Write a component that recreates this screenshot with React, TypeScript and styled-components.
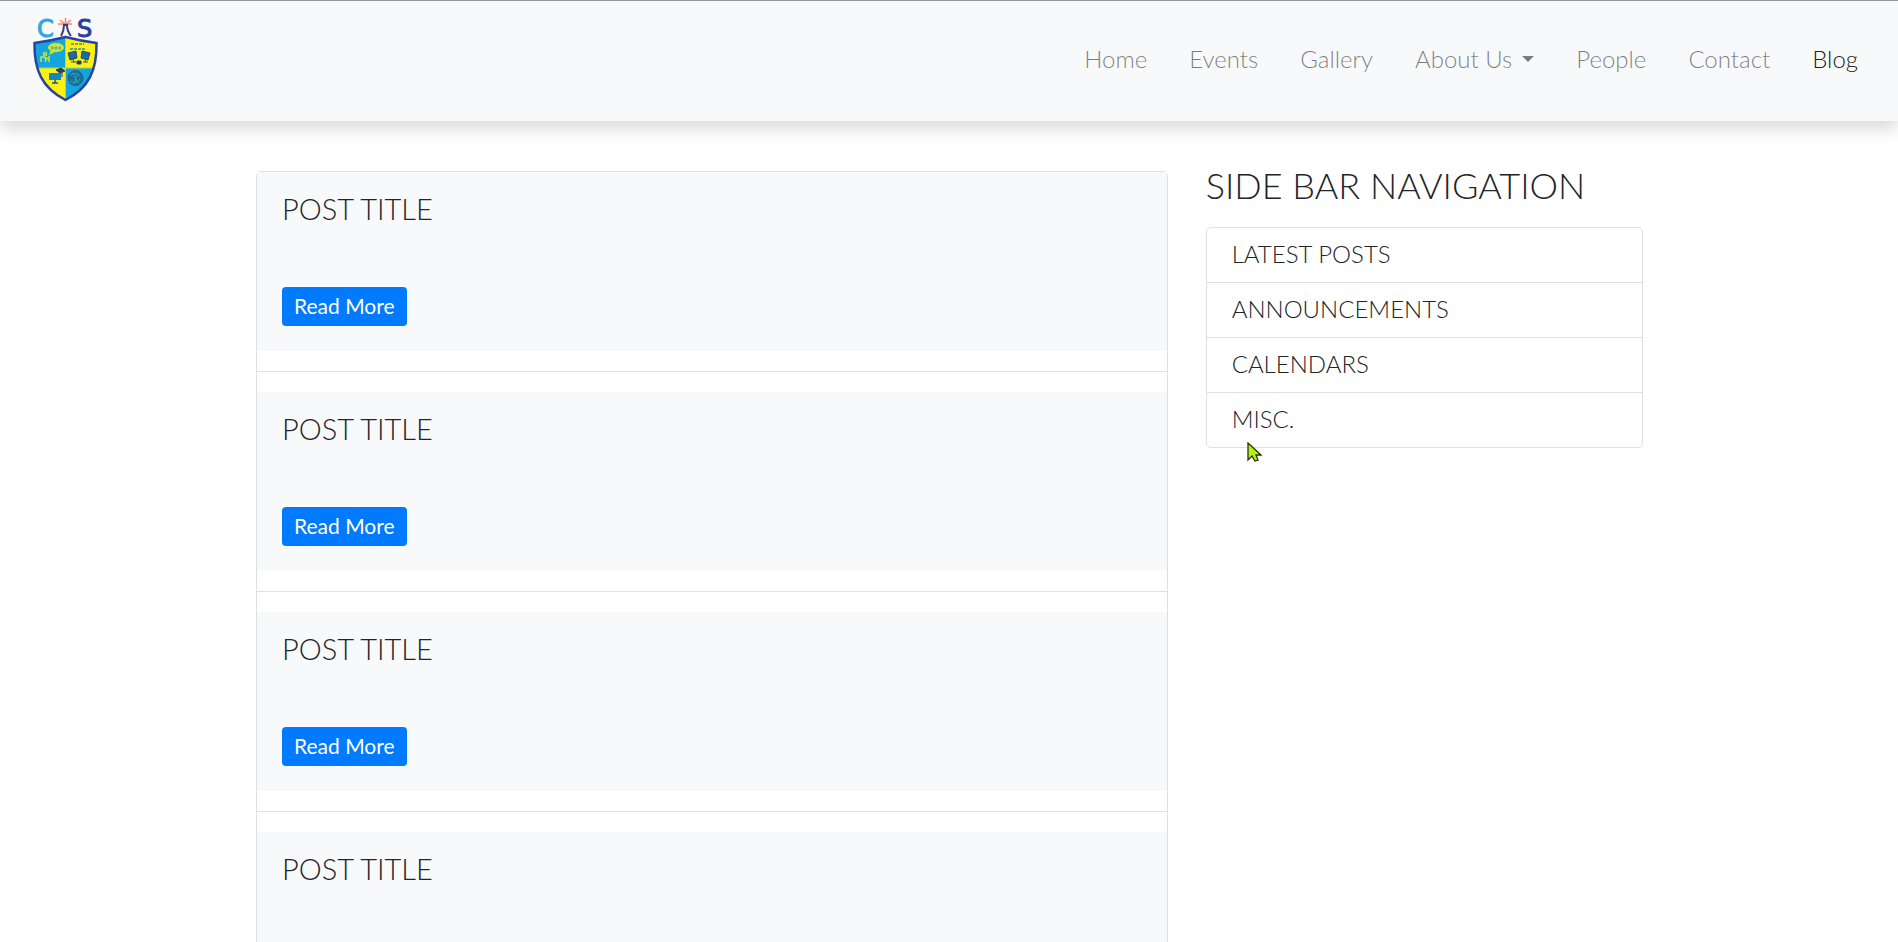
import React from 'react';
import styled, { createGlobalStyle } from 'styled-components';

const GlobalStyle = createGlobalStyle`
  *, *::before, *::after { box-sizing: border-box; }
  html, body { margin: 0; }
  body {
    background: #fff;
    color: #212529;
    font-family: Lato, "Liberation Sans", sans-serif;
    font-size: 24px;
    font-weight: 300;
    line-height: 30px;
  }
`;

const Page = styled.div`
  height: 100vh;
  overflow-y: auto;
  scrollbar-width: none;
`;

const Navbar = styled.header`
  display: flex;
  align-items: center;
  justify-content: space-between;
  padding: 10px 40px 10px 20px;
  background: #f8f9fa;
  border-top: 1px solid #97989c;
  box-shadow: 0 8px 16px rgba(0, 0, 0, 0.15);
`;

const Brand = styled.a`
  display: block;
  height: 100px;
  svg { display: block; }
`;

const NavList = styled.ul`
  display: flex;
  gap: 42px;
  margin: 0;
  padding: 0 0 4px;
  list-style: none;
`;

const NavLink = styled.a<{ $active?: boolean }>`
  display: flex;
  align-items: center;
  gap: 10px;
  color: ${(p) => (p.$active ? 'rgba(0, 0, 0, 0.9)' : 'rgba(0, 0, 0, 0.5)')};
  font-size: 24px;
  text-decoration: none;
`;

const Caret = styled.span`
  border-top: 6px solid currentColor;
  border-left: 6px solid transparent;
  border-right: 6px solid transparent;
`;

const Container = styled.div`
  display: grid;
  grid-template-columns: 2fr 1fr;
  column-gap: 1px;
  align-items: start;
  max-width: 1424px;
  margin: 50px auto 0;
`;

const Column = styled.div`
  padding: 0 18px 0 19px;
`;

const Feed = styled.main`
  border: 1px solid #dfdfdf;
  border-radius: 5px;
`;

const Post = styled.article`
  padding: 25px;
  background: #f8f9fa;
`;

const PostTitle = styled.h2`
  margin: 0 0 67px;
  font-size: 29px;
  font-weight: 300;
  line-height: 23px;
`;

const ReadMore = styled.button`
  display: block;
  height: 39px;
  padding: 0 12px 2px;
  border: 0;
  border-radius: 4px;
  background: #007bff;
  color: #fff;
  font: 400 21px/36px Lato, "Liberation Sans", sans-serif;
`;

const Divider = styled.hr`
  margin: 20px 0;
  border: 0;
  border-top: 1px solid #e0e1e2;
`;

const SideTitle = styled.h1`
  margin: 0 0 28px;
  font-size: 36px;
  font-weight: 300;
  line-height: 28px;
  white-space: nowrap;
`;

const SideList = styled.ul`
  margin: 0;
  padding: 0;
  list-style: none;
  border: 1px solid #dfdfdf;
  border-radius: 5px;
`;

const SideItem = styled.li`
  position: relative;
  & + & { border-top: 1px solid #dfdfdf; }
`;

const SideLink = styled.a`
  display: block;
  padding: 11px 25px 13px;
  color: #212529;
  text-decoration: none;
`;

const Pointer = styled.svg`
  position: absolute;
  top: 49px;
  left: 40px;
`;

function Logo() {
  return (
    <svg width="90" height="100" viewBox="20 11 90 100" role="img" aria-label="CAS">
      <rect x="22" y="16" width="84" height="91" fill="#f9f9fa" />
      <g fontFamily="DejaVu Sans" fontWeight="400" fontSize="24" strokeWidth="1">
        <text x="37" y="37" fill="#2aa9e6" stroke="#2aa9e6">C</text>
        <text x="77" y="37" fill="#2f3f9c" stroke="#2f3f9c">S</text>
      </g>
      <path d="M58 24h14M60 20l5 4M71 20l-5 4M65.500 18v7" stroke="#f0896e" strokeWidth="1.500" />
      <path d="M61 36q3-5 3-11h3q0 6 4 11" fill="none" stroke="#3d3b72" strokeWidth="2" />
      <clipPath id="shield"><path d="M34.500 43Q50 41 65.500 37Q81 41 96.500 43C97 70 89 88 65.500 100C42 88 34 70 34.500 43Z" /></clipPath>
      <g clipPath="url(#shield)">
        <rect x="30" y="35" width="36" height="33" fill="#13a5dc" />
        <rect x="66" y="35" width="34" height="33" fill="#fbef13" />
        <rect x="30" y="68" width="36" height="35" fill="#fbef13" />
        <rect x="66" y="68" width="34" height="35" fill="#13a5dc" />
        <path d="M65.500 36v66M34 68h63" stroke="#b6d548" strokeWidth="1" />
      </g>
      <ellipse cx="56" cy="47.500" rx="8" ry="4.500" fill="#d5e52d" />
      <path d="m51 50-2 5 6-3z" fill="#d5e52d" />
      <path d="M51 48h10M52 46v4M56 46v4M60 46v4" stroke="#4daf9b" strokeWidth="1" />
      <g fill="none" stroke="#c9e33b" strokeWidth="1.500">
        <circle cx="45" cy="54" r="1.500" />
        <path d="M41 62v-5h4l1 5M44 57l4 2M49 62v-6" />
      </g>
      <path d="M71 44h13M70 49h16" stroke="#6da65c" strokeWidth="2" strokeDasharray="3 1" />
      <g fill="#176f9e" stroke="#244f70" strokeWidth="1">
        <path d="m68 53 8-2 1 7-7 2zM82 51l8 2-2 7-7-2z" />
        <path d="m73 59 1 3M86 59l-1 3M71 62h5M83 62h5" />
        <path d="M77 61h4v3h-4z" fill="#25334f" />
      </g>
      <path d="M49 73h12v7H49z" fill="#1685bd" />
      <path d="M55 80v3M52 83h6" stroke="#24547e" strokeWidth="1.500" />
      <path d="m56 70 5-2 4 3-5 2zM62 72v5" fill="#23416b" stroke="#23416b" />
      <circle cx="75.500" cy="78" r="7.500" fill="#17719f" stroke="#255e93" />
      <path d="M70 75q6-4 10 1M70 81q6 4 10-2M72 73q6 5 2 11M78 74q-5 5 1 9" fill="none" stroke="#35a1b8" />
      <path d="M34.500 43Q50 41 65.500 37Q81 41 96.500 43C97 70 89 88 65.500 100C42 88 34 70 34.500 43Z" fill="none" stroke="#27449f" strokeWidth="2.500" />
    </svg>
  );
}

const navItems = [
  { label: 'Home' },
  { label: 'Events' },
  { label: 'Gallery' },
  { label: 'About Us', menu: true },
  { label: 'People' },
  { label: 'Contact' },
  { label: 'Blog', active: true },
];
const posts = [1, 2, 3, 4];
const sections = ['LATEST POSTS', 'ANNOUNCEMENTS', 'CALENDARS', 'MISC.'];

export default function App() {
  return (
    <Page>
      <GlobalStyle />
      <Navbar>
        <Brand href="#"><Logo /></Brand>
        <nav>
          <NavList>
            {navItems.map((item) => (
              <li key={item.label}>
                <NavLink href="#" $active={item.active}>
                  {item.label}
                  {item.menu && <Caret />}
                </NavLink>
              </li>
            ))}
          </NavList>
        </nav>
      </Navbar>
      <Container>
        <Column>
          <Feed>
            {posts.map((id, i) => (
              <React.Fragment key={id}>
                {i > 0 && <Divider />}
                <Post>
                  <PostTitle>POST TITLE</PostTitle>
                  <ReadMore type="button">Read More</ReadMore>
                </Post>
              </React.Fragment>
            ))}
          </Feed>
        </Column>
        <Column as="aside">
          <SideTitle>SIDE BAR NAVIGATION</SideTitle>
          <SideList>
            {sections.map((name) => (
              <SideItem key={name}>
                <SideLink href="#">{name}</SideLink>
                {name === 'MISC.' && (
                  <Pointer width="15" height="20" viewBox="0 0 15 20" aria-hidden="true">
                    <path d="M1 1v17l4-4 3 5 3-1-2-5h5z" fill="#b5f013" stroke="#26330c" strokeWidth="1.300" />
                  </Pointer>
                )}
              </SideItem>
            ))}
          </SideList>
        </Column>
      </Container>
    </Page>
  );
}
